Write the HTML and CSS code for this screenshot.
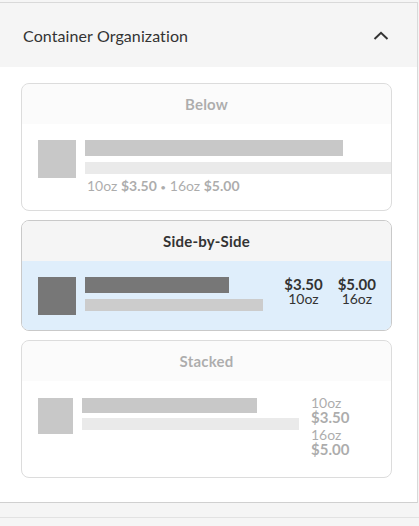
FILE: index.html
```html
<!DOCTYPE html>
<html>
<head>
<meta charset="utf-8">
<link rel="stylesheet" href="styles.css">
</head>
<body>
<section class="panel">
  <header class="panel-head">
    <span class="panel-title">Container Organization</span>
    <svg class="chev" width="16" height="10" viewBox="0 0 16 10"><path d="M1.5 8 L8 1.8 L14.5 8" fill="none" stroke="#333" stroke-width="2"/></svg>
  </header>
  <div class="panel-body">
    <div class="card off">
      <div class="card-head">Below</div>
      <div class="card-body below">
        <div class="thumb"></div>
        <div class="info">
          <div class="bar bar1 w-below1"></div>
          <div class="bar bar2 w-below2"></div>
          <div class="price-line">10oz <b>$3.50</b> <span class="dot">•</span> 16oz <b>$5.00</b></div>
        </div>
      </div>
    </div>
    <div class="card on">
      <div class="card-head">Side-by-Side</div>
      <div class="card-body side">
        <div class="thumb"></div>
        <div class="info">
          <div class="bar bar1 w-side1"></div>
          <div class="bar bar2 w-side2"></div>
        </div>
        <div class="prices">
          <div class="pcol"><b>$3.50</b><span>10oz</span></div>
          <div class="pcol"><b>$5.00</b><span>16oz</span></div>
        </div>
      </div>
    </div>
    <div class="card off">
      <div class="card-head">Stacked</div>
      <div class="card-body stacked">
        <div class="thumb small"></div>
        <div class="info">
          <div class="bar bar1 w-st1"></div>
          <div class="bar bar2 w-st2"></div>
        </div>
        <div class="stack">
          <div class="sgroup"><span>10oz</span><b>$3.50</b></div>
          <div class="sgroup"><span>16oz</span><b>$5.00</b></div>
        </div>
      </div>
    </div>
  </div>
</section>
<div class="below-panel"></div>
<div class="next-panel"></div>
</body>
</html>
```
FILE: styles.css
```css
* { box-sizing: border-box; }
html, body { margin: 0; padding: 0; }
body {
  background: #f5f5f5;
  font-family: Lato, "Liberation Sans", sans-serif;
  color: #333;
  padding-top: 2px;
}
.panel {
  width: 418px;
  background: #fff;
  border-top: 1px solid #d9d9d9;
  border-right: 1px solid #d9d9d9;
  border-bottom: 1px solid #d0d0d0;
}
.panel-head {
  height: 64px;
  background: #f5f5f5;
  display: flex;
  align-items: center;
  justify-content: space-between;
  padding: 0 28px 0 23px;
}
.panel-title { font-size: 16px; color: #333; letter-spacing: 0.1px; }
.chev { display: block; margin-top: 1px; }
.panel-body {
  padding: 16px 25px 24px 21px;
  display: flex;
  flex-direction: column;
  gap: 9px;
}
.card {
  border: 1px solid #c9c9c9;
  border-radius: 8px;
  overflow: hidden;
}
.card.off { border-color: #dcdcdc; }
.card.off > * { opacity: 0.4; }
.card-head {
  height: 40px;
  background: #f5f5f5;
  display: flex;
  align-items: center;
  justify-content: center;
  font-weight: 700;
  font-size: 15px;
  color: #333;
  letter-spacing: 0.2px;
}
.card-body {
  display: flex;
  align-items: flex-start;
  padding: 16px 15px 15px 16px;
}
.card.on .card-body { background: #dfeefb; }
.thumb { width: 38px; height: 38px; background: #777; flex: none; }
.thumb.small { width: 35px; height: 36px; }
.info { margin-left: 9px; flex: 1; min-width: 0; }
.bar1 { height: 16px; background: #777; }
.bar2 { height: 12px; background: #ccc; margin-top: 6px; }
.w-below1 { width: 258px; }
.w-below2 { width: 320px; }
.w-side1 { width: 144px; }
.w-side2 { width: 178px; }
.w-st1 { width: 175px; height: 15px; }
.w-st2 { width: 217px; margin-top: 5px; }
.price-line {
  font-size: 14px;
  margin-top: 4px;
  margin-left: 2px;
  line-height: 16px;
  white-space: nowrap;
}
.price-line b { font-weight: 700; }
.dot { font-size: 10px; }
.prices {
  display: flex;
  gap: 15px;
  flex: none;
  margin-top: 0;
}
.pcol {
  display: flex;
  flex-direction: column;
  align-items: center;
}
.pcol b { font-size: 15px; font-weight: 700; line-height: 15px; }
.pcol span { font-size: 14px; line-height: 14px; }
.stacked { padding-top: 17px; padding-bottom: 20px; }
.stacked .info { flex: none; width: 217px; }
.stack {
  margin-left: 12px;
  display: flex;
  flex-direction: column;
  gap: 3px;
  margin-top: -2px;
}
.sgroup { display: flex; flex-direction: column; }
.sgroup span { font-size: 14px; line-height: 14px; }
.sgroup b { font-size: 15px; font-weight: 700; line-height: 15px; }
.below-panel { height: 14px; }
.next-panel { border-top: 1px solid #e2e2e2; height: 20px; }
```
